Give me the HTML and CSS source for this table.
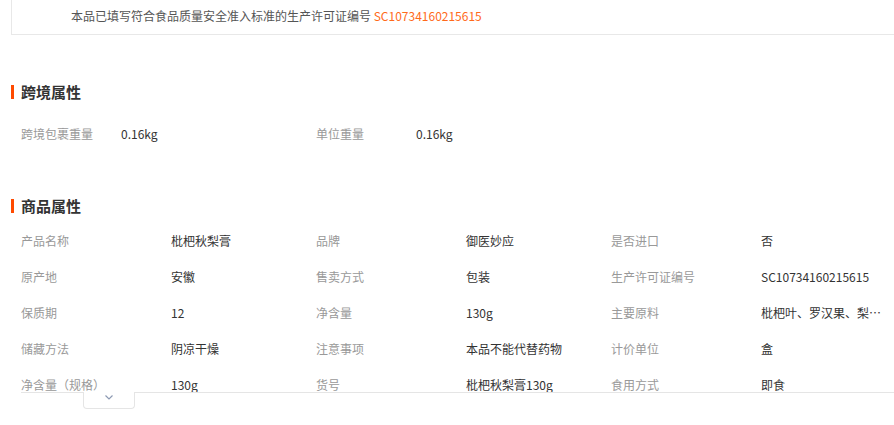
FILE: index.html
```html
<html>
<head>
<meta charset="utf-8">
<link rel="stylesheet" href="styles.css">
</head>
<body>
<div class="wrap">

  <div class="license-box">
    本品已填写符合食品质量安全准入标准的生产许可证编号 <span class="code">SC10734160215615</span>
  </div>

  <h3 class="section-title">跨境属性</h3>
  <div class="attr-list cross">
    <span class="attr-name">跨境包裹重量</span><span class="attr-value">0.16kg</span>
    <span class="attr-name">单位重量</span><span class="attr-value">0.16kg</span>
  </div>

  <h3 class="section-title second">商品属性</h3>
  <div class="attr-list goods">
    <span class="attr-name">产品名称</span><span class="attr-value">枇杷秋梨膏</span>
    <span class="attr-name">品牌</span><span class="attr-value">御医妙应</span>
    <span class="attr-name">是否进口</span><span class="attr-value">否</span>

    <span class="attr-name">原产地</span><span class="attr-value">安徽</span>
    <span class="attr-name">售卖方式</span><span class="attr-value">包装</span>
    <span class="attr-name">生产许可证编号</span><span class="attr-value">SC10734160215615</span>

    <span class="attr-name">保质期</span><span class="attr-value">12</span>
    <span class="attr-name">净含量</span><span class="attr-value">130g</span>
    <span class="attr-name">主要原料</span><span class="attr-value short">枇杷叶、罗汉果、梨、桔梗、甘草</span>

    <span class="attr-name">储藏方法</span><span class="attr-value">阴凉干燥</span>
    <span class="attr-name">注意事项</span><span class="attr-value">本品不能代替药物</span>
    <span class="attr-name">计价单位</span><span class="attr-value">盒</span>

    <span class="attr-name">净含量（规格）</span><span class="attr-value">130g</span>
    <span class="attr-name">货号</span><span class="attr-value">枇杷秋梨膏130g</span>
    <span class="attr-name">食用方式</span><span class="attr-value">即食</span>
  </div>
  <div class="fold-tab">
    <svg width="8" height="5" viewBox="0 0 8 5"><path d="M0.5 0.5 L4 4 L7.5 0.5" fill="none" stroke="#8d9ab3" stroke-width="1.2"/></svg>
  </div>

</div>
</body>
</html>
```

FILE: styles.css
```css
body {
	margin: 0;
	overflow: hidden;
	background: #fff;
	font-family: "Noto Sans CJK SC", "Noto Sans", sans-serif;
	font-size: 12px;
	color: #333;
}

.wrap {
	width: 1000px;
	padding-left: 11px;
}

.license-box {
	margin-top: -1px;
	border: 1px solid #e8e8e8;
	padding-left: 59px;
	padding-bottom: 2px;
	line-height: 32px;
	color: #555;
}

.license-box .code {
	color: #ff6a1a;
}

.section-title {
	margin: 47px 0 0 0;
	height: 20px;
	line-height: 20px;
	font-size: 15px;
	font-weight: bold;
	color: #333;
	display: flex;
	align-items: center;
}

.section-title:before {
	content: "";
	width: 3px;
	height: 14px;
	background: #ff4a00;
	margin-right: 7px;
}

.section-title.second {
	margin-top: 44px;
}

.attr-list {
	margin-left: 10px;
	display: grid;
	line-height: 36px;
}

.attr-list.cross {
	padding-top: 14px;
	grid-template-columns: 100px 195px 100px 195px;
}

.attr-list.goods {
	box-sizing: border-box;
	padding-top: 7px;
	height: 177px;
	overflow: hidden;
	border-bottom: 1px solid #e5e5e5;
	grid-template-columns: 150px 145px 150px 145px 150px 145px;
}

.attr-name {
	color: #999;
	white-space: nowrap;
}

.attr-value {
	color: #333;
	white-space: nowrap;
}

.attr-value.short {
	max-width: 122px;
	overflow: hidden;
	text-overflow: ellipsis;
}

.fold-tab {
	width: 52px;
	height: 17px;
	margin: -1px 0 0 72px;
	background: #fff;
	border: 1px solid #e5e5e5;
	border-top: none;
	border-radius: 0 0 4px 4px;
	display: flex;
	justify-content: center;
	padding-top: 3px;
	box-sizing: border-box;
}

.fold-tab svg {
	display: block;
}
```
